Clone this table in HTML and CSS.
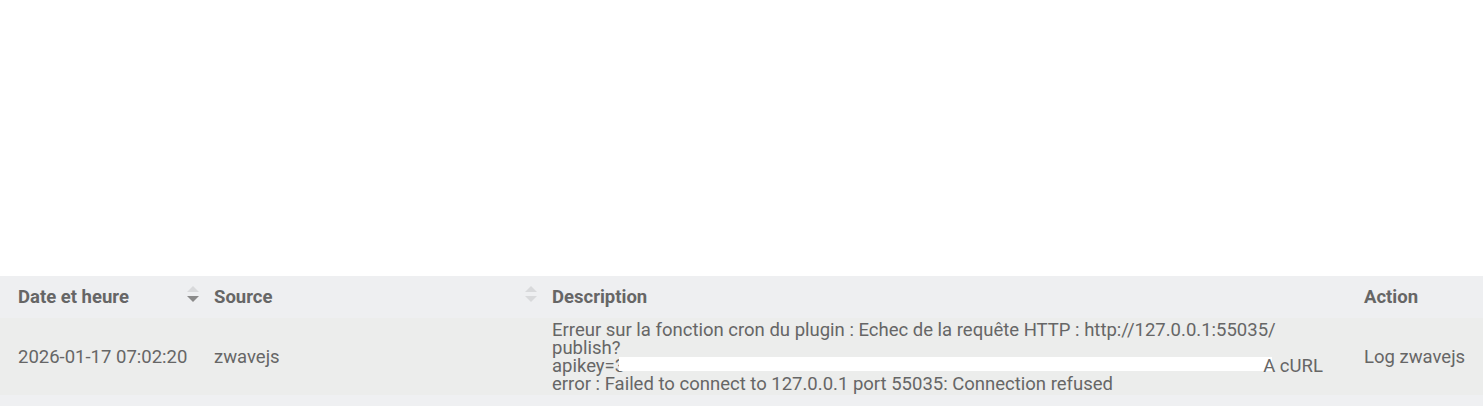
FILE: index.html
```html
<!DOCTYPE html>
<html lang="fr">
<head>
  <meta charset="UTF-8">
  <title>Messages</title>
  <link rel="stylesheet" href="styles.css">
</head>
<body>

  <div id="topArea"></div>

  <table id="messageTable">
    <thead>
      <tr>
        <th class="colDate sortable sortDesc">Date et heure</th>
        <th class="colSource sortable">Source</th>
        <th class="colDesc">Description</th>
        <th class="colAction">Action</th>
      </tr>
    </thead>
    <tbody>
      <tr>
        <td>2026-01-17 07:02:20</td>
        <td>zwavejs</td>
        <td class="desc">Erreur sur la fonction cron du plugin : Echec de la requête HTTP : http://127.0.0.1:55035/<br>publish?<br>apikey=3<span class="redacted"></span>A cURL<br>error : Failed to connect to 127.0.0.1 port 55035: Connection refused</td>
        <td>Log zwavejs</td>
      </tr>
    </tbody>
  </table>

  <div id="tableFooter"></div>

</body>
</html>
```
FILE: styles.css
```css
body {
  margin: 0;
  font-family: Roboto, "Liberation Sans", Arial, sans-serif;
  background-color: #fff;
  color: #666;
}

#topArea {
  height: 276px;
}

#messageTable {
  width: 100%;
  border-collapse: collapse;
  table-layout: fixed;
  font-size: 18.5px;
}

#messageTable th {
  background-color: #eeeff1;
  color: #666;
  font-weight: bold;
  text-align: left;
  line-height: 18px;
  padding: 12px 10px;
  position: relative;
}

#messageTable td {
  background-color: #ecedec;
  line-height: 18px;
  padding: 3px 10px 2px 10px;
  vertical-align: middle;
}

#messageTable th.colDate,
#messageTable td:first-child {
  padding-left: 18px;
}

.colDate {
  width: 176px;
}

.colSource {
  width: 318px;
}

.colDesc {
  width: 792px;
}

/* sort arrows */
.sortable::before,
.sortable::after {
  content: "";
  position: absolute;
  right: 5px;
  border-left: 6px solid transparent;
  border-right: 6px solid transparent;
}

.sortable::before {
  top: 10px;
  border-bottom: 6px solid #d8d9db;
}

.sortable::after {
  top: 20px;
  border-top: 6px solid #d8d9db;
}

.sortDesc::after {
  border-top-color: #8a8a8a;
}

.desc {
  word-wrap: break-word;
}

.redacted {
  display: inline-block;
  width: 653px;
  height: 14px;
  margin-left: -6px;
  margin-right: -9px;
  background-color: #fff;
  vertical-align: 1px;
}

#tableFooter {
  height: 11px;
  background-color: #eff0f2;
}
```
